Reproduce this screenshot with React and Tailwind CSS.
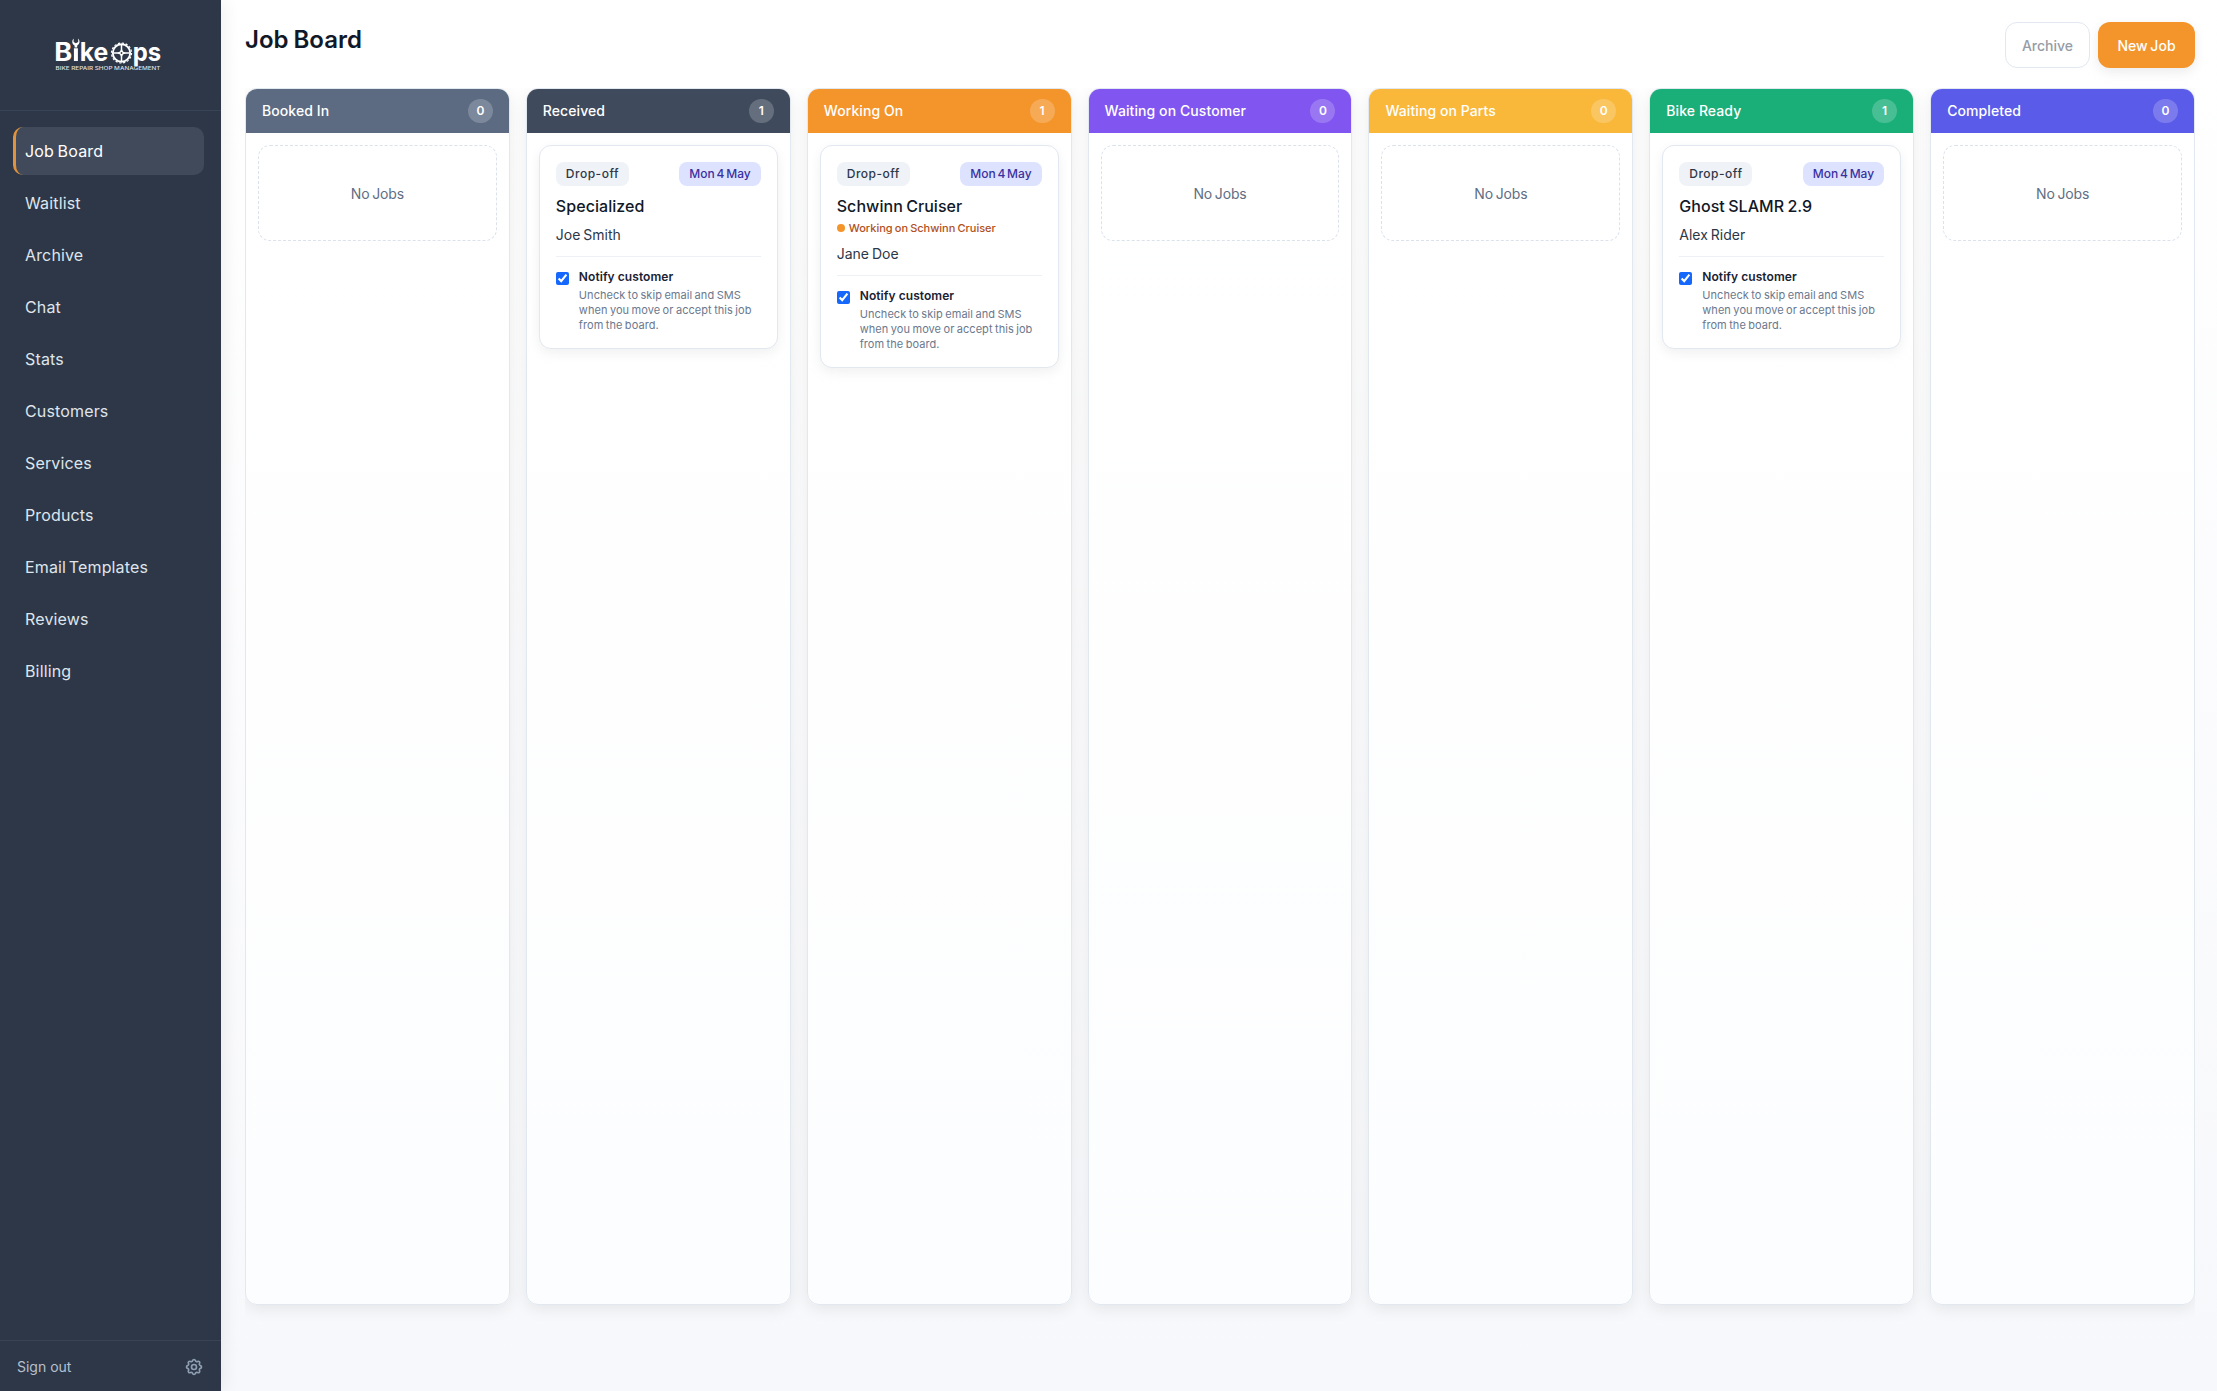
import { HiOutlineCog } from 'react-icons/hi';

const navItems = [
  'Job Board',
  'Waitlist',
  'Archive',
  'Chat',
  'Stats',
  'Customers',
  'Services',
  'Products',
  'Email Templates',
  'Reviews',
  'Billing',
];

const columns = [
  { title: 'Booked In', color: 'bg-[#5c6b82]', jobs: [] },
  { title: 'Received', color: 'bg-[#3f4a5c]', jobs: [{ bike: 'Specialized', customer: 'Joe Smith' }] },
  {
    title: 'Working On',
    color: 'bg-[#f4952b]',
    jobs: [{ bike: 'Schwinn Cruiser', customer: 'Jane Doe', status: 'Working on Schwinn Cruiser' }],
  },
  { title: 'Waiting on Customer', color: 'bg-[#8155ef]', jobs: [] },
  { title: 'Waiting on Parts', color: 'bg-[#f9b83a]', jobs: [] },
  { title: 'Bike Ready', color: 'bg-[#1aae78]', jobs: [{ bike: 'Ghost SLAMR 2.9', customer: 'Alex Rider' }] },
  { title: 'Completed', color: 'bg-[#5b5bea]', jobs: [] },
];

const Logo = () => (
  <svg width="108" height="36" viewBox="0 0 108 36" fill="white" fontFamily="Inter, sans-serif">
    <g fontSize="25" fontWeight="700">
      <text x="-0.8" y="25" textLength="18" lengthAdjust="spacingAndGlyphs">B</text>
      <text x="24.8" y="25" textLength="28.6" lengthAdjust="spacingAndGlyphs">ke</text>
      <text x="77.8" y="25" textLength="28.4" lengthAdjust="spacingAndGlyphs">ps</text>
    </g>
    {/* wrench standing in for the i */}
    <path d="M18.900 25V12.200H22.900V25ZM19.600 11.400V9.600C17.200 8.600 16.300 5 18.600 2.600V6L20.900 7.200L23.200 6V2.600C25.500 5 24.600 8.600 22.200 9.600V11.400Z" />
    {/* chainring */}
    <g fill="none" stroke="white">
      <circle cx="66.500" cy="17" r="10" strokeWidth="1.200" strokeDasharray="2.200 1.727" />
      <circle cx="66.500" cy="17" r="8.700" strokeWidth="1.900" />
      <path d="M66.500 9V25M58.500 17H74.500" strokeWidth="1.500" />
    </g>
    <path d="M66.500 12.500L68 15.500L71 17L68 18.500L66.500 21.500L65 18.500L62 17L65 15.500Z" />
    <circle cx="66.500" cy="17" r="0.900" fill="#2d3748" />
    <text x="0.500" y="33.800" fontSize="4.600" fontWeight="500" fillOpacity="0.85" textLength="105" lengthAdjust="spacingAndGlyphs">
      BIKE REPAIR SHOP MANAGEMENT
    </text>
  </svg>
);

const Sidebar = () => (
  <aside className="w-[221px] shrink-0 flex flex-col bg-[#2d3748] shadow-[4px_0_16px_rgba(0,0,0,0.06)] z-10">
    <div className="h-[111px] border-b border-[#384355] pl-[55px] pt-[36px]">
      <Logo />
    </div>
    <nav className="flex-1 flex flex-col gap-1 pt-4 pl-[13px] pr-[17px]">
      {navItems.map((item, i) => (
        <a
          key={item}
          className={
            i === 0
              ? 'h-12 flex items-center rounded-[10px] border-l-[3px] border-[#e0933a] bg-[#404a5b] pl-[9px] text-white tracking-[0.15px] [word-spacing:-1px]'
              : 'h-12 flex items-center rounded-[10px] border-l-[3px] border-transparent pl-[9px] text-[#dfe5ec] tracking-[0.15px] [word-spacing:-2px]'
          }
        >
          {item}
        </a>
      ))}
    </nav>
    <div className="h-[51px] border-t border-[#384355] flex items-center justify-between pl-[17px] pr-[17px] pt-px">
      <span className="text-sm text-[#b6c0cd]">Sign out</span>
      <HiOutlineCog className="size-5 text-[#8f9fb3]" />
    </div>
  </aside>
);

const JobCard = ({ job }) => (
  <div className="rounded-xl border border-[#e2e8f0] bg-white px-4 pt-4 pb-[15px] shadow-[0_4px_12px_rgba(0,0,0,0.06)]">
    <div className="flex justify-between text-xs font-medium">
      <span className="h-6 px-[10px] flex items-center rounded-lg bg-[#eff2f7] text-[#2d3748] tracking-[0.5px]">
        Drop-off
      </span>
      <span className="h-6 px-[10px] flex items-center rounded-lg bg-[#dde3ff] text-[#3a31a0] [word-spacing:-1.4px]">
        Mon 4 May
      </span>
    </div>
    <h3 className="mt-2 h-6 leading-6 font-medium text-[#111827] tracking-[0.05px] [word-spacing:-1px]">{job.bike}</h3>
    {job.status && (
      <div className="h-[19px] pt-px flex items-center gap-1 text-[11px] font-medium text-[#b1501c] [word-spacing:-0.8px]">
        <span className="size-2 rounded-full bg-[#f4952b]" />
        {job.status}
      </div>
    )}
    <p className="mt-[7px] text-sm text-[#2d3748] [word-spacing:-1px]">{job.customer}</p>
    <label className="mt-[11px] pt-3 flex border-t border-[#edf1f6]">
      <input type="checkbox" defaultChecked className="mt-[3px] mr-[10px] size-[13px] shrink-0 accent-[#1568fb]" />
      <span>
        <span className="block text-xs leading-[15px] font-semibold text-[#1a2233] tracking-[0.06px]">
          Notify customer
        </span>
        <span className="mt-1 block text-[11px] leading-[15px] text-[#6b788d] tracking-[0.05px] [word-spacing:-0.7px] whitespace-nowrap">
          Uncheck to skip email and SMS
          <br />
          when you move or accept this job
          <br />
          from the board.
        </span>
      </span>
    </label>
  </div>
);

const Column = ({ column }) => (
  <section className="flex-1 min-w-0 flex flex-col rounded-xl border border-[#e2e8f0] bg-linear-to-b from-white to-[#fcfdfe] shadow-[0_4px_16px_rgba(0,0,0,0.08)]">
    <header className={`h-11 flex items-center justify-between rounded-t-[11px] px-4 text-white ${column.color}`}>
      <h2 className="text-sm font-medium tracking-[0.08px]">{column.title}</h2>
      <span className="min-w-[25px] h-6 flex items-center justify-center rounded-full bg-white/20 text-xs font-semibold">
        {column.jobs.length}
      </span>
    </header>
    <div className="p-3">
      {column.jobs.length === 0 ? (
        <div className="h-24 pt-0.5 flex items-center justify-center rounded-xl border border-dashed border-[#dbe2eb] text-sm text-[#5f6e84] [word-spacing:-1px] tracking-[-0.15px]">
          No Jobs
        </div>
      ) : (
        column.jobs.map((job) => <JobCard key={job.bike} job={job} />)
      )}
    </div>
  </section>
);

export default function App() {
  return (
    <div className="h-screen flex overflow-hidden font-['Inter',sans-serif]">
      <Sidebar />
      <main className="flex-1 min-w-0 flex flex-col pl-6 pr-[22px] pt-[22px] bg-linear-to-b from-white to-[#f7f8fb]">
        <div className="h-[66px] flex items-start justify-between">
          <h1 className="text-2xl leading-[35px] font-semibold text-[#111827] [word-spacing:-1px]">Job Board</h1>
          <div className="flex gap-2 text-sm font-medium">
            <button className="h-[46px] w-[85px] rounded-xl border border-[#e2e8f0] bg-white pt-0.5 text-[#969ca6]">
              Archive
            </button>
            <button className="h-[46px] w-[97px] rounded-xl bg-[#f4952b] pt-0.5 text-white [word-spacing:-1px] shadow-[0_4px_12px_rgba(0,0,0,0.08)]">
              New Job
            </button>
          </div>
        </div>
        <div className="h-[1235px] flex gap-4 overflow-hidden pb-[18px]">
          {columns.map((column) => (
            <Column key={column.title} column={column} />
          ))}
        </div>
      </main>
    </div>
  );
}
